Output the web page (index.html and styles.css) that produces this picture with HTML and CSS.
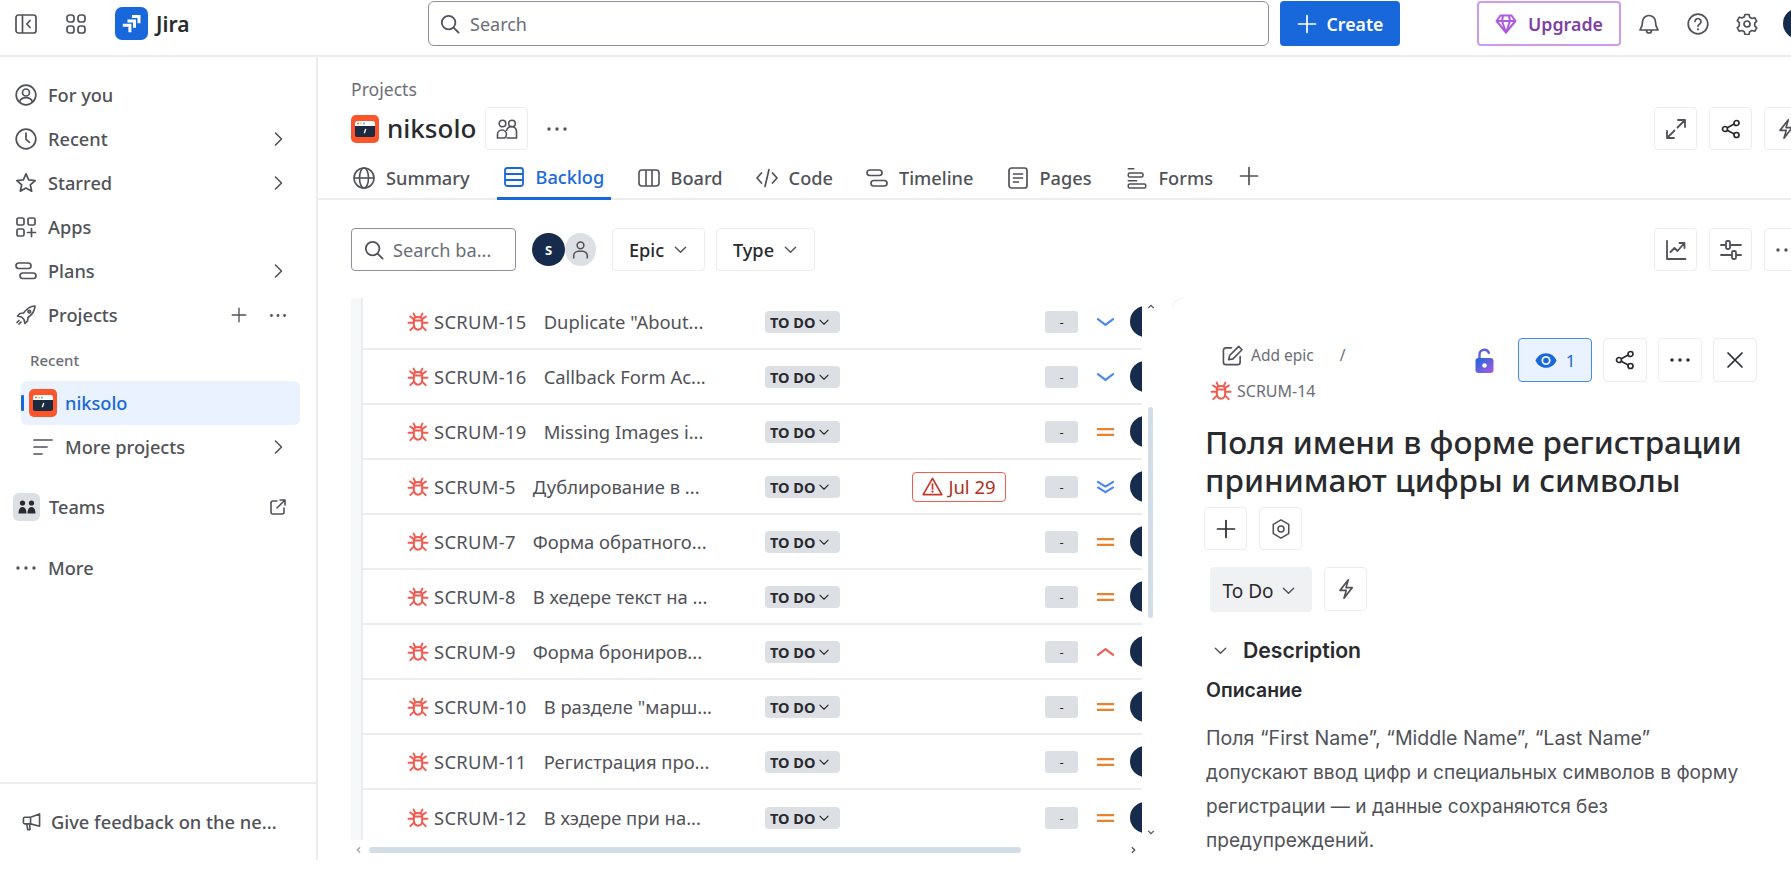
FILE: index.html
```html
<!DOCTYPE html>
<html lang="en">
<head>
<meta charset="utf-8">
<title>Jira backlog</title>
<link rel="stylesheet" href="styles.css">
</head>
<body>
<svg class="defs" aria-hidden="true">
  <defs>
    <symbol id="bug" viewBox="0 0 20 20"><g fill="none" stroke="#f15b50" stroke-width="1.800" stroke-linecap="round" stroke-linejoin="round"><path d="M6.200 8.200c0-1.600 1.600-2.800 3.800-2.800s3.800 1.200 3.800 2.800v4.400c0 2.400-1.700 4.400-3.800 4.400s-3.800-2-3.800-4.400z"/><path d="M6.400 8.600h7.200M7.600 5.600 6 2.400M12.400 5.600 14 2.400M6.200 10.600H1.400M13.800 10.600h4.800M6.400 14 3 17.400M13.600 14l3.400 3.400M6 7.200 2.800 5M14 7.200 17.200 5"/></g></symbol>
    <symbol id="chev-r" viewBox="0 0 16 16"><path d="m5.500 2 6 6-6 6" fill="none" stroke="#505258" stroke-width="1.600" stroke-linecap="round" stroke-linejoin="round"/></symbol>
    <symbol id="chev-d" viewBox="0 0 16 16"><path d="m2.500 5.500 5.500 5.500 5.500-5.500" fill="none" stroke="currentColor" stroke-width="1.500" stroke-linecap="round" stroke-linejoin="round"/></symbol>
    <symbol id="dots" viewBox="0 0 22 6"><g fill="currentColor"><circle cx="3" cy="3" r="1.700"/><circle cx="11" cy="3" r="1.700"/><circle cx="19" cy="3" r="1.700"/></g></symbol>
    <symbol id="plus" viewBox="0 0 20 20"><path d="M10 1.500v17M1.500 10h17" fill="none" stroke="currentColor" stroke-width="1.700" stroke-linecap="round"/></symbol>
    <symbol id="search" viewBox="0 0 20 20"><g fill="none" stroke="#505258" stroke-width="1.800" stroke-linecap="round"><circle cx="8.600" cy="8.600" r="6.800"/><path d="m13.600 13.600 5 5"/></g></symbol>
    <symbol id="share" viewBox="0 0 20 20"><g fill="none" stroke="#292a2e" stroke-width="1.700"><circle cx="4" cy="10" r="2.500"/><circle cx="15.500" cy="4" r="2.500"/><circle cx="15.500" cy="16" r="2.500"/><path d="m6.200 8.800 7-3.700M6.200 11.200l7 3.700"/></g></symbol>
    <symbol id="bolt" viewBox="0 0 20 24"><path d="M12.500 2 3.500 13.500h6.800l-2.500 8.500 9-11.500h-6.800z" fill="none" stroke="#505258" stroke-width="1.800" stroke-linejoin="round"/></symbol>
    <symbol id="proj" viewBox="0 0 28 28"><rect width="28" height="28" rx="5" fill="#fc552c"/><rect x="4" y="6" width="20" height="16" rx="2" fill="#1c2b42"/><path d="M4 11V8a2 2 0 0 1 2-2h16a2 2 0 0 1 2 2v3z" fill="#fff"/><circle cx="7" cy="8.600" r="1" fill="#f15b50"/><circle cx="10" cy="8.600" r="1" fill="#fbc828"/><circle cx="13" cy="8.600" r="1" fill="#42b2d7"/><path d="m14.600 14.500-1.200 3.200" stroke="#fff" stroke-width="1.400" stroke-linecap="round"/></symbol>
  </defs>
</svg>

<header class="topbar">
  <div class="topbar-left">
    <svg class="ic-panel" viewBox="0 0 22 20"><g fill="none" stroke="#505258" stroke-width="1.700"><rect x="1" y="1" width="20" height="18" rx="2.500"/><path d="M7.500 1v18"/><path d="m15 6.500-3.200 3.500 3.200 3.500" stroke-linecap="round" stroke-linejoin="round"/></g></svg>
    <svg class="ic-grid" viewBox="0 0 20 20"><g fill="none" stroke="#505258" stroke-width="1.700"><rect x="1" y="1" width="7" height="7" rx="2.500"/><rect x="12" y="1" width="7" height="7" rx="2.500"/><rect x="1" y="12" width="7" height="7" rx="2.500"/><rect x="12" y="12" width="7" height="7" rx="2.500"/></g></svg>
    <svg class="ic-jira" viewBox="0 0 33 33"><rect width="33" height="33" rx="7" fill="#1868db"/><g fill="#fff"><path d="M17 8h8.500v8.200h-3V11h-5.500z"/><path d="M12.500 12.400H21v8.300h-3v-5.300h-5.500z"/><path d="M7.800 16.800h8.600v8.400h-3v-5.400H7.800z"/></g></svg>
    <span class="brand">Jira</span>
  </div>
  <div class="global-search">
    <svg class="ic-20" viewBox="0 0 20 20"><use href="#search"/></svg>
    <span>Search</span>
  </div>
  <button class="create"><svg class="ic-20" viewBox="0 0 20 20"><use href="#plus"/></svg>Create</button>
  <button class="upgrade">
    <svg class="ic-gem" viewBox="0 0 22 20"><g fill="none" stroke="#af59e1" stroke-width="2" stroke-linejoin="round"><path d="M5.500 1.500h11l4 5.500L11 18.500 1.500 7z"/><path d="M1.500 7h19M8 1.500 7 7l4 11.500L15 7l-1-5.500"/></g></svg>
    Upgrade
  </button>
  <svg class="ic-top" viewBox="0 0 22 22"><g fill="none" stroke="#505258" stroke-width="1.700" stroke-linejoin="round" stroke-linecap="round"><path d="M4.500 9a6.500 6.500 0 0 1 13 0c0 4.500 2 6.500 2.500 8H2c.5-1.500 2.500-3.500 2.500-8zM8.500 17.500a2.500 2.500 0 0 0 5 0"/></g></svg>
  <svg class="ic-top" viewBox="0 0 22 22"><g fill="none" stroke="#505258" stroke-width="1.700" stroke-linecap="round"><circle cx="11" cy="11" r="9.800"/><path d="M8 8.500a3 3 0 1 1 4.700 2.500c-1 .7-1.700 1.200-1.700 2.300"/></g><circle cx="11" cy="16.300" r="1.100" fill="#505258"/></svg>
  <svg class="ic-top" viewBox="0 0 22 22"><g fill="none" stroke="#505258" stroke-width="1.700" stroke-linejoin="round"><path d="m9 1.500h4l.7 2.800 2.200 1.200 2.800-.8 2 3.500-2 2 0 2.600 2 2-2 3.500-2.800-.8-2.200 1.200-.7 2.800H9l-.7-2.800-2.200-1.200-2.800.8-2-3.500 2-2V9.700l-2-2 2-3.500 2.800.8 2.200-1.200z"/><circle cx="11" cy="11" r="3"/></g></svg>
  <span class="me"></span>
</header>

<div class="body">
  <nav class="sidebar">
    <div class="side-main">
      <a class="nav"><svg class="ic-nav" viewBox="0 0 22 22"><g fill="none" stroke="#505258" stroke-width="1.700"><circle cx="11" cy="11" r="9.800"/><circle cx="11" cy="8.500" r="3.500"/><path d="M4.500 18c1-3 3.500-4.300 6.500-4.300s5.500 1.300 6.500 4.300"/></g></svg><span>For you</span></a>
      <a class="nav"><svg class="ic-nav" viewBox="0 0 22 22"><g fill="none" stroke="#505258" stroke-width="1.700" stroke-linecap="round"><circle cx="11" cy="11" r="9.800"/><path d="M11 5v6.300l3.500 3"/></g></svg><span>Recent</span><svg class="chev" viewBox="0 0 16 16"><use href="#chev-r"/></svg></a>
      <a class="nav"><svg class="ic-nav" viewBox="0 0 22 22"><path d="m11 1.800 2.700 6 6.500.7-4.900 4.300 1.400 6.400L11 16l-5.700 3.200 1.400-6.400L1.800 8.500l6.500-.7z" fill="none" stroke="#505258" stroke-width="1.700" stroke-linejoin="round"/></svg><span>Starred</span><svg class="chev" viewBox="0 0 16 16"><use href="#chev-r"/></svg></a>
      <a class="nav"><svg class="ic-nav" viewBox="0 0 22 22"><g fill="none" stroke="#505258" stroke-width="1.700" stroke-linecap="round"><rect x="2" y="2" width="7" height="7" rx="1.500"/><rect x="13" y="2" width="7" height="7" rx="1.500"/><rect x="2" y="13" width="7" height="7" rx="1.500"/><path d="M16.500 12.500v8M12.500 16.500h8"/></g></svg><span>Apps</span></a>
      <a class="nav"><svg class="ic-nav" viewBox="0 0 22 22"><g fill="none" stroke="#505258" stroke-width="1.700"><rect x="1" y="3" width="15" height="5.500" rx="2.750"/><rect x="5" y="13" width="16" height="5.500" rx="2.750"/></g></svg><span>Plans</span><svg class="chev" viewBox="0 0 16 16"><use href="#chev-r"/></svg></a>
      <a class="nav"><svg class="ic-nav" viewBox="0 0 22 22"><g fill="none" stroke="#505258" stroke-width="1.700" stroke-linejoin="round" stroke-linecap="round"><path d="M20 2c-5 .2-8.500 2.800-11.500 7L5 9.500 2.500 12l4 1 2.500 2.500 1 4 2.500-2.500.5-3.500c4.200-3 6.800-6.500 7-11.500z"/><circle cx="14.300" cy="7.700" r="1.300"/><path d="M4 16.500 2 18.500M6 18l-2 2"/></g></svg><span>Projects</span><svg class="ic-plus" viewBox="0 0 20 20"><use href="#plus"/></svg><svg class="ic-dots" viewBox="0 0 22 6"><use href="#dots"/></svg></a>
      <div class="recent">Recent</div>
      <a class="project-link"><svg class="ic-proj" viewBox="0 0 28 28"><use href="#proj"/></svg><span>niksolo</span></a>
      <a class="nav nav-sub"><svg class="ic-lines" viewBox="0 0 20 18"><path d="M1 2h18M1 9h13M1 16h8" fill="none" stroke="#505258" stroke-width="1.700" stroke-linecap="round"/></svg><span>More projects</span><svg class="chev" viewBox="0 0 16 16"><use href="#chev-r"/></svg></a>
      <a class="nav nav-teams"><span class="teams-box"><svg viewBox="0 0 18 14"><g fill="#292a2e"><circle cx="4.500" cy="3" r="2.600"/><circle cx="13.500" cy="3" r="2.600"/><path d="M.5 13.500c0-4 1.500-6.500 4-6.500s4 2.500 4 6.500zM9.500 13.500c0-4 1.500-6.500 4-6.500s4 2.500 4 6.500z"/></g></svg></span><span>Teams</span><svg class="ic-ext" viewBox="0 0 16 16"><g fill="none" stroke="#505258" stroke-width="1.600" stroke-linecap="round" stroke-linejoin="round"><path d="M7 2H3a2 2 0 0 0-2 2v9a2 2 0 0 0 2 2h9a2 2 0 0 0 2-2V9"/><path d="M10 1h5v5M15 1 7 9"/></g></svg></a>
      <a class="nav nav-more"><svg class="ic-nav-dots" viewBox="0 0 22 6"><use href="#dots"/></svg><span>More</span></a>
    </div>
    <div class="feedback"><svg class="ic-mega" viewBox="0 0 20 20"><g fill="none" stroke="#505258" stroke-width="1.700" stroke-linejoin="round" stroke-linecap="round"><path d="M18.500 2v13L9 12.500H3a1.500 1.500 0 0 1-1.500-1.500V7A1.500 1.500 0 0 1 3 5.500h6zM9 5.500v7M5 12.500l1 6h2.500l-.5-6"/></g></svg><span>Give feedback on the ne...</span></div>
  </nav>

  <main class="main">
    <div class="crumb">Projects</div>
    <div class="title-row">
      <svg class="ic-title" viewBox="0 0 28 28"><use href="#proj"/></svg>
      <h1 class="title">niksolo</h1>
      <button class="sq"><svg class="ic-22" viewBox="0 0 22 22"><g fill="none" stroke="#505258" stroke-width="1.600"><circle cx="6.500" cy="5.500" r="3.300"/><circle cx="16" cy="5.500" r="3.300"/><path d="M1.500 20v-3.500a4.500 4.500 0 0 1 9 0 4.500 4.500 0 0 1-2 3.500zM10.500 13a4.500 4.500 0 0 1 10 1v6h-10"/></g></svg></button>
      <svg class="ic-title-dots" viewBox="0 0 22 6"><use href="#dots"/></svg>
      <div class="actions">
        <button class="sq"><svg class="ic-22" viewBox="0 0 22 22"><path d="M13 2h7v7M20 2l-7.500 7.500M9 20H2v-7M2 20l7.500-7.500" fill="none" stroke="#505258" stroke-width="1.800" stroke-linecap="round" stroke-linejoin="round"/></svg></button>
        <button class="sq"><svg class="ic-20" viewBox="0 0 20 20"><use href="#share"/></svg></button>
        <button class="sq"><svg class="ic-22" viewBox="0 0 20 24"><use href="#bolt"/></svg></button>
      </div>
    </div>
    <div class="tabs">
      <a class="tab tab-summary"><svg class="ic-tab" viewBox="0 0 22 22"><g fill="none" stroke="#505258" stroke-width="1.600"><circle cx="11" cy="11" r="10"/><ellipse cx="11" cy="11" rx="4.500" ry="10"/><path d="M1 11h20"/></g></svg>Summary</a>
      <a class="tab tab-backlog"><svg class="ic-tab" viewBox="0 0 20 22"><g fill="none" stroke="#1868db" stroke-width="1.800"><rect x="1" y="2" width="18" height="18" rx="2.500"/><path d="M1 8h18M1 14h18"/></g></svg>Backlog</a>
      <a class="tab tab-board"><svg class="ic-tab" viewBox="0 0 22 20"><g fill="none" stroke="#505258" stroke-width="1.600"><rect x="1" y="2" width="20" height="16" rx="3"/><path d="M8 2v16M14 2v16"/></g></svg>Board</a>
      <a class="tab tab-code"><svg class="ic-tab" viewBox="0 0 22 20"><path d="M5.500 5 1 10l4.500 5M16.500 5 21 10l-4.500 5M13 1.500 9 18.500" fill="none" stroke="#505258" stroke-width="1.700" stroke-linecap="round" stroke-linejoin="round"/></svg>Code</a>
      <a class="tab tab-timeline"><svg class="ic-tab" viewBox="0 0 22 20"><g fill="none" stroke="#505258" stroke-width="1.700"><rect x="1" y="2" width="15" height="5.500" rx="2.750"/><rect x="5" y="12.500" width="16" height="5.500" rx="2.750"/></g></svg>Timeline</a>
      <a class="tab tab-pages"><svg class="ic-tab-sm" viewBox="0 0 20 22"><g fill="none" stroke="#505258" stroke-width="1.700" stroke-linecap="round"><rect x="1" y="1" width="18" height="20" rx="2.500"/><path d="M5.500 7h9M5.500 11h9M5.500 15h5"/></g></svg>Pages</a>
      <a class="tab tab-forms"><svg class="ic-tab" viewBox="0 0 22 24"><g fill="none" stroke="#505258" stroke-width="1.700" stroke-linecap="round"><path d="M1.500 2h6"/><rect x="1.500" y="6.500" width="16" height="4.500" rx="1.500"/><path d="M1.500 15h9"/><rect x="1.500" y="18.500" width="19" height="4.500" rx="1.500"/></g></svg>Forms</a>
      <svg class="ic-tab-plus" viewBox="0 0 20 20"><use href="#plus"/></svg>
    </div>
    <div class="toolbar">
      <div class="board-search"><svg class="ic-20" viewBox="0 0 20 20"><use href="#search"/></svg><span>Search ba...</span></div>
      <div class="avatars"><span class="av-s">S</span><span class="av-u"><svg viewBox="0 0 20 22"><g fill="none" stroke="#505258" stroke-width="1.800"><circle cx="10" cy="5.500" r="4"/><path d="M2 21v-3a5.500 5.500 0 0 1 5.500-5.500h5A5.500 5.500 0 0 1 18 18v3"/></g></svg></span></div>
      <button class="filter filter-epic">Epic<svg class="ic-chev-f" viewBox="0 0 16 16"><use href="#chev-d"/></svg></button>
      <button class="filter filter-type">Type<svg class="ic-chev-f" viewBox="0 0 16 16"><use href="#chev-d"/></svg></button>
      <div class="actions">
        <button class="sq"><svg class="ic-22" viewBox="0 0 22 22"><path d="M2 2v18h18.500M5.500 13l4-4 3 3L19 4.500M14.500 4H19.500v5" fill="none" stroke="#505258" stroke-width="1.800" stroke-linecap="round" stroke-linejoin="round"/></svg></button>
        <button class="sq"><svg class="ic-22" viewBox="0 0 22 22"><g fill="none" stroke="#505258" stroke-width="1.800" stroke-linecap="round"><path d="M1 6h4M11 6h10M1 16h10M17 16h4"/><rect x="6" y="2" width="4" height="8" rx="1.500"/><rect x="12" y="12" width="4" height="8" rx="1.500"/></g></svg></button>
        <button class="sq"><svg class="ic-22" viewBox="0 0 22 6"><use href="#dots"/></svg></button>
      </div>
    </div>

    <div class="workarea">
      <div class="backlog">
        <div class="list-wrap">
          <div class="rail"></div>
          <div class="rows">
            <div class="row"><div class="cell-issue"><svg class="bug" viewBox="0 0 20 20"><use href="#bug"/></svg><span class="key">SCRUM-15</span><span class="summary">Duplicate "About...</span></div><span class="loz">TO DO<svg class="loz-chev" viewBox="0 0 16 16"><use href="#chev-d"/></svg></span><div class="cell-date"></div><span class="sprint">-</span><svg class="prio" viewBox="0 0 20 14"><path d="m2 4 8 6 8-6" fill="none" stroke="#4688ec" stroke-width="2.200" stroke-linecap="round" stroke-linejoin="round"/></svg><span class="assignee"></span></div>
            <div class="row"><div class="cell-issue"><svg class="bug" viewBox="0 0 20 20"><use href="#bug"/></svg><span class="key">SCRUM-16</span><span class="summary">Callback Form Ac...</span></div><span class="loz">TO DO<svg class="loz-chev" viewBox="0 0 16 16"><use href="#chev-d"/></svg></span><div class="cell-date"></div><span class="sprint">-</span><svg class="prio" viewBox="0 0 20 14"><path d="m2 4 8 6 8-6" fill="none" stroke="#4688ec" stroke-width="2.200" stroke-linecap="round" stroke-linejoin="round"/></svg><span class="assignee"></span></div>
            <div class="row"><div class="cell-issue"><svg class="bug" viewBox="0 0 20 20"><use href="#bug"/></svg><span class="key">SCRUM-19</span><span class="summary">Missing Images i...</span></div><span class="loz">TO DO<svg class="loz-chev" viewBox="0 0 16 16"><use href="#chev-d"/></svg></span><div class="cell-date"></div><span class="sprint">-</span><svg class="prio" viewBox="0 0 20 14"><path d="M1 4h18M1 10h18" fill="none" stroke="#e9822e" stroke-width="2.400"/></svg><span class="assignee"></span></div>
            <div class="row"><div class="cell-issue"><svg class="bug" viewBox="0 0 20 20"><use href="#bug"/></svg><span class="key">SCRUM-5</span><span class="summary">Дублирование в ...</span></div><span class="loz">TO DO<svg class="loz-chev" viewBox="0 0 16 16"><use href="#chev-d"/></svg></span><div class="cell-date"><span class="date"><svg class="ic-warn" viewBox="0 0 22 20"><g fill="none" stroke="#c9372c" stroke-width="1.800" stroke-linejoin="round" stroke-linecap="round"><path d="M11 1.500 1.200 18.500h19.600z"/><path d="M11 7.500v5"/></g><circle cx="11" cy="15.300" r="1.200" fill="#c9372c"/></svg>Jul 29</span></div><span class="sprint">-</span><svg class="prio" viewBox="0 0 20 14"><path d="m2 1.500 8 5 8-5M2 7.500l8 5 8-5" fill="none" stroke="#4688ec" stroke-width="2.200" stroke-linecap="round" stroke-linejoin="round"/></svg><span class="assignee"></span></div>
            <div class="row"><div class="cell-issue"><svg class="bug" viewBox="0 0 20 20"><use href="#bug"/></svg><span class="key">SCRUM-7</span><span class="summary">Форма обратного...</span></div><span class="loz">TO DO<svg class="loz-chev" viewBox="0 0 16 16"><use href="#chev-d"/></svg></span><div class="cell-date"></div><span class="sprint">-</span><svg class="prio" viewBox="0 0 20 14"><path d="M1 4h18M1 10h18" fill="none" stroke="#e9822e" stroke-width="2.400"/></svg><span class="assignee"></span></div>
            <div class="row"><div class="cell-issue"><svg class="bug" viewBox="0 0 20 20"><use href="#bug"/></svg><span class="key">SCRUM-8</span><span class="summary">В хедере текст на ...</span></div><span class="loz">TO DO<svg class="loz-chev" viewBox="0 0 16 16"><use href="#chev-d"/></svg></span><div class="cell-date"></div><span class="sprint">-</span><svg class="prio" viewBox="0 0 20 14"><path d="M1 4h18M1 10h18" fill="none" stroke="#e9822e" stroke-width="2.400"/></svg><span class="assignee"></span></div>
            <div class="row"><div class="cell-issue"><svg class="bug" viewBox="0 0 20 20"><use href="#bug"/></svg><span class="key">SCRUM-9</span><span class="summary">Форма брониров...</span></div><span class="loz">TO DO<svg class="loz-chev" viewBox="0 0 16 16"><use href="#chev-d"/></svg></span><div class="cell-date"></div><span class="sprint">-</span><svg class="prio" viewBox="0 0 20 14"><path d="m2 10 8-6 8 6" fill="none" stroke="#f15b50" stroke-width="2.200" stroke-linecap="round" stroke-linejoin="round"/></svg><span class="assignee"></span></div>
            <div class="row"><div class="cell-issue"><svg class="bug" viewBox="0 0 20 20"><use href="#bug"/></svg><span class="key">SCRUM-10</span><span class="summary">В разделе "марш...</span></div><span class="loz">TO DO<svg class="loz-chev" viewBox="0 0 16 16"><use href="#chev-d"/></svg></span><div class="cell-date"></div><span class="sprint">-</span><svg class="prio" viewBox="0 0 20 14"><path d="M1 4h18M1 10h18" fill="none" stroke="#e9822e" stroke-width="2.400"/></svg><span class="assignee"></span></div>
            <div class="row"><div class="cell-issue"><svg class="bug" viewBox="0 0 20 20"><use href="#bug"/></svg><span class="key">SCRUM-11</span><span class="summary">Регистрация про...</span></div><span class="loz">TO DO<svg class="loz-chev" viewBox="0 0 16 16"><use href="#chev-d"/></svg></span><div class="cell-date"></div><span class="sprint">-</span><svg class="prio" viewBox="0 0 20 14"><path d="M1 4h18M1 10h18" fill="none" stroke="#e9822e" stroke-width="2.400"/></svg><span class="assignee"></span></div>
            <div class="row"><div class="cell-issue"><svg class="bug" viewBox="0 0 20 20"><use href="#bug"/></svg><span class="key">SCRUM-12</span><span class="summary">В хэдере при на...</span></div><span class="loz">TO DO<svg class="loz-chev" viewBox="0 0 16 16"><use href="#chev-d"/></svg></span><div class="cell-date"></div><span class="sprint">-</span><svg class="prio" viewBox="0 0 20 14"><path d="M1 4h18M1 10h18" fill="none" stroke="#e9822e" stroke-width="2.400"/></svg><span class="assignee"></span></div>
          </div>
          <div class="vscroll">
            <svg class="arrow" viewBox="0 0 10 6"><path d="m1.500 5 3.500-3.500L8.500 5" fill="none" stroke="#505258" stroke-width="1.600"/></svg>
            <div class="vthumb"></div>
            <svg class="arrow arrow-down" viewBox="0 0 10 6"><path d="m1.500 1 3.500 3.500L8.500 1" fill="none" stroke="#505258" stroke-width="1.600"/></svg>
          </div>
        </div>
        <div class="hscroll">
          <svg class="arrow-h" viewBox="0 0 6 10"><path d="M5 1.500 1.500 5 5 8.500" fill="none" stroke="#a0a4ab" stroke-width="1.600"/></svg>
          <div class="hthumb"></div>
          <svg class="arrow-h arrow-right" viewBox="0 0 6 10"><path d="M1 1.500 4.500 5 1 8.500" fill="none" stroke="#505258" stroke-width="1.600"/></svg>
        </div>
      </div>

      <aside class="detail">
        <div class="detail-top">
          <div class="crumbs">
            <div class="crumb-epic"><svg class="ic-edit" viewBox="0 0 22 22"><g fill="none" stroke="#505258" stroke-width="1.700" stroke-linecap="round" stroke-linejoin="round"><path d="M10 3H4a2.500 2.500 0 0 0-2.500 2.500V18A2.500 2.500 0 0 0 4 20.500h12.500A2.500 2.500 0 0 0 19 18v-6"/><path d="M17.500 1.500 21 5l-9.500 9.500-4.500 1 1-4.500z"/></g></svg><span>Add epic</span><span class="slash">/</span></div>
            <div class="crumb-key"><svg class="bug" viewBox="0 0 20 20"><use href="#bug"/></svg><span>SCRUM-14</span></div>
          </div>
          <svg class="ic-lock" viewBox="0 0 20 26"><defs><linearGradient id="lockg" x1="0" y1="0" x2="1" y2="1"><stop offset="0" stop-color="#1868db"/><stop offset="1" stop-color="#af59e1"/></linearGradient></defs><path d="M5 10V6.500a4.800 4.800 0 0 1 9.300-1.600" fill="none" stroke="#5b5fe0" stroke-width="2.400" stroke-linecap="round"/><rect x="1" y="10" width="18" height="15" rx="3" fill="url(#lockg)"/><circle cx="10" cy="17.500" r="2.200" fill="#fff"/></svg>
          <button class="watch"><svg class="ic-eye" viewBox="0 0 24 16"><path d="M12 0C6.500 0 2.500 3.500.5 8c2 4.500 6 8 11.500 8s9.500-3.500 11.500-8C21.500 3.500 17.500 0 12 0z" fill="#1868db"/><circle cx="12" cy="8" r="5" fill="#e9f2fe"/><circle cx="12" cy="8" r="3" fill="#1868db"/></svg>1</button>
          <button class="sq"><svg class="ic-20" viewBox="0 0 20 20"><use href="#share"/></svg></button>
          <button class="sq"><svg class="ic-22 dk" viewBox="0 0 22 6"><use href="#dots"/></svg></button>
          <button class="sq"><svg class="ic-18" viewBox="0 0 18 18"><path d="m2 2 14 14M16 2 2 16" fill="none" stroke="#292a2e" stroke-width="1.700" stroke-linecap="round"/></svg></button>
        </div>
        <h2 class="issue-title">Поля имени в форме регистрации принимают цифры и символы</h2>
        <div class="issue-actions">
          <button class="sq"><svg class="ic-20 dk" viewBox="0 0 20 20"><use href="#plus"/></svg></button>
          <button class="sq"><svg class="ic-20" viewBox="0 0 20 22"><g fill="none" stroke="#505258" stroke-width="1.700" stroke-linejoin="round"><path d="M10 1 18.500 6v10L10 21 1.500 16V6z"/><circle cx="10" cy="11" r="3.300"/></g></svg></button>
        </div>
        <div class="status-row">
          <button class="status">To Do<svg class="ic-chev-s" viewBox="0 0 16 16"><use href="#chev-d"/></svg></button>
          <button class="sq"><svg class="ic-22" viewBox="0 0 20 24"><use href="#bolt"/></svg></button>
        </div>
        <div class="desc-head"><svg class="ic-chev-desc" viewBox="0 0 16 16"><use href="#chev-d"/></svg><span>Description</span></div>
        <h3 class="desc-sub">Описание</h3>
        <p class="desc-text"><span class="latin">Поля “First Name”, “Middle Name”, “Last Name”</span><br>допускают ввод цифр и специальных символов в форму регистрации — и данные сохраняются без предупреждений.</p>
      </aside>
    </div>
  </main>
</div>
</body>
</html>
```

FILE: styles.css
```css
* { box-sizing: border-box; }
html, body { margin: 0; height: 100%; background: #fff; overflow: hidden; }
body { font-family: "Noto Sans", "Liberation Sans", sans-serif; color: #505258; width: 1791px; height: 888px; }
svg { display: block; flex: none; }
button { font: inherit; color: inherit; background: #fff; padding: 0; margin: 0; cursor: default; }
h1, h2, h3, p { margin: 0; }
.defs { width: 0; height: 0; position: absolute; }

.topbar { height: 57px; border-bottom: 2px solid #ebecee; display: flex; align-items: flex-start; padding-top: 1px; overflow: hidden; }
.topbar > * { flex: none; }
.topbar-left { width: 428px; height: 45px; display: flex; align-items: center; padding-left: 15px; }
.ic-panel { width: 22px; height: 20px; }
.ic-grid { width: 20px; height: 20px; margin-left: 29px; }
.ic-jira { width: 33px; height: 33px; margin-left: 29px; }
.brand { margin-left: 8px; font-size: 21px; font-weight: 600; color: #292a2e; }
.global-search { width: 841px; height: 45px; border: 1.500px solid #8c8f97; border-radius: 6px; display: flex; align-items: center; padding-left: 11px; gap: 10px; font-size: 18px; color: #6b6e76; }
.create { margin-left: 11px; width: 120px; height: 45px; background: #1868db; color: #fff; border: 0; border-radius: 4px; display: flex; align-items: center; justify-content: center; gap: 10px; font-size: 17.700px; font-weight: 600; }
.upgrade { margin-left: 77px; width: 144px; height: 45px; border: 2px solid #cf9bef; border-radius: 4px; color: #803fa5; display: flex; align-items: center; justify-content: center; gap: 11px; font-size: 17.800px; font-weight: 600; }
.ic-gem { width: 22px; height: 20px; }
.ic-top { width: 22px; height: 22px; margin-top: 12px; }
.upgrade + .ic-top { margin-left: 17px; }
.ic-top + .ic-top { margin-left: 27px; }
.me { width: 32px; height: 31px; border-radius: 50%; background: #172b4d; margin: 7px 0 0 25px; flex: none; }

.body { display: flex; height: 803px; }
.sidebar { width: 318px; border-right: 2px solid #ebecee; display: flex; flex-direction: column; flex: none; }
.side-main { flex: 1; padding-top: 16px; }
.nav { height: 44px; display: flex; align-items: center; padding-left: 15px; font-size: 18.200px; font-weight: 500; color: #505258; }
.nav > span:nth-of-type(1) { margin-left: 11px; }
.ic-nav { width: 22px; height: 22px; }
.chev { width: 16px; height: 16px; margin-left: auto; margin-right: 30px; }
.ic-plus { width: 16px; height: 16px; margin-left: auto; color: #505258; }
.ic-dots { width: 18px; height: 5px; margin: 0 29px 0 22px; color: #505258; }
.recent { height: 30px; margin-top: 8px; padding-left: 30px; font-size: 15px; line-height: 30px; font-weight: 500; color: #6b6e76; }
.project-link { margin: 6px 16px 0 21px; height: 44px; border-radius: 6px; background: #e9f2fe; display: flex; align-items: center; padding-left: 8px; gap: 8px; color: #1868db; font-size: 18.200px; font-weight: 500; position: relative; }
.project-link::before { content: ""; position: absolute; left: 0; top: 14px; width: 3px; height: 16px; border-radius: 1px; background: #1868db; }
.ic-proj { width: 28px; height: 28px; }
.nav-sub { height: 44px; padding-left: 33px; }
.nav-sub > span:nth-of-type(1) { margin-left: 12px; }
.ic-lines { width: 20px; height: 18px; }
.nav-teams { margin-top: 16px; padding-left: 13px; height: 44px; }
.nav-teams > span:nth-of-type(1) { margin-left: 0; }
.nav-teams > span:nth-of-type(2) { margin-left: 9px; }
.teams-box { width: 27px; height: 28px; border-radius: 6px; background: #dcdfe4; display: flex; align-items: center; justify-content: center; }
.teams-box svg { width: 18px; height: 14px; }
.ic-ext { width: 16px; height: 16px; margin-left: auto; margin-right: 30px; }
.nav-more { margin-top: 17px; }
.ic-nav-dots { width: 22px; height: 6px; color: #505258; }
.feedback { height: 78px; border-top: 2px solid #ebecee; display: flex; align-items: center; padding: 0 0 2px 22px; gap: 10px; font-size: 18.300px; font-weight: 500; color: #505258; }
.ic-mega { width: 19px; height: 19px; }

.main { flex: 1; min-width: 0; padding-top: 21px; display: flex; flex-direction: column; }
.crumb { height: 29px; padding-left: 33px; font-size: 17.600px; line-height: 22px; color: #6b6e76; }
.title-row { height: 43px; padding-left: 33px; display: flex; align-items: center; margin-right: -16px; }
.ic-title { width: 28px; height: 28px; }
.title { margin: 0 9px 0 8px; font-size: 26px; font-weight: 500; color: #292a2e; line-height: 43px; }
.ic-title-dots { width: 22px; height: 6px; margin-left: 18px; color: #505258; }
.actions { margin-left: auto; display: flex; gap: 12px; }
.sq { width: 43px; height: 43px; border: 1.500px solid #ebecee; border-radius: 4px; display: flex; align-items: center; justify-content: center; flex: none; }
.ic-22 { width: 22px; height: 22px; color: #505258; }
.ic-20 { width: 20px; height: 20px; }
.ic-18 { width: 18px; height: 18px; }
.dk { color: #292a2e; }
.sq .ic-22[viewBox="0 0 22 6"] { height: 6px; }
.tabs { height: 50px; border-bottom: 2px solid #ebecee; padding-left: 35px; display: flex; align-items: stretch; font-size: 18.200px; font-weight: 500; color: #505258; position: relative; }
.tab { display: flex; align-items: center; gap: 11px; height: 48px; padding-top: 7px; }
.ic-tab { width: 22px; height: 22px; }
.ic-tab-sm { width: 20px; height: 22px; }
.tab-backlog { margin: 0 0 -2px 27px; height: 50px; padding: 6px 7px 0 7px; border-bottom: 3px solid #1868db; color: #1868db; width: 114px; gap: 12px; }
.tab-backlog .ic-tab { width: 20px; }
.tab-board { margin-left: 27px; }
.tab-code { margin-left: 33px; }
.tab-timeline { margin-left: 33px; }
.tab-pages { margin-left: 35px; }
.tab-forms { margin-left: 34px; }
.ic-tab-plus { width: 20px; height: 20px; margin: 16px 0 0 26px; color: #505258; }
.toolbar { margin-top: 28px; height: 43px; padding-left: 33px; margin-right: -16px; display: flex; align-items: center; flex: none; }
.board-search { width: 165px; height: 43px; border: 1.500px solid #8c8f97; border-radius: 4px; display: flex; align-items: center; padding-left: 12px; gap: 9px; font-size: 18.200px; color: #6b6e76; }
.avatars { display: flex; margin-left: 16px; }
.av-s { width: 33px; height: 33px; border-radius: 50%; background: #172b4d; color: #fff; font-size: 13px; font-weight: 700; display: flex; align-items: center; justify-content: center; }
.av-u { width: 31px; height: 33px; border-radius: 50%; background: #dcdfe4; display: flex; align-items: center; justify-content: center; }
.av-u svg { width: 17px; height: 20px; }
.filter { height: 43px; border: 1.500px solid #ebecee; border-radius: 4px; display: flex; align-items: center; justify-content: center; gap: 9px; font-size: 18.200px; font-weight: 500; color: #292a2e; }
.filter-epic { width: 93px; margin-left: 16px; }
.filter-type { width: 99px; margin-left: 11px; }
.ic-chev-f { width: 15px; height: 15px; color: #505258; }

.workarea { margin-top: 27px; flex: 1; min-height: 0; display: flex; padding-left: 33px; }
.backlog { width: 821px; flex: none; display: flex; flex-direction: column; }
.list-wrap { height: 542px; display: flex; }
.rail { width: 12px; background: #f7f8f9; border-right: 2px solid #ebecee; flex: none; }
.rows { width: 779px; overflow: hidden; flex: none; }
.rows .row:first-child { margin-top: -3px; }
.row { height: 55px; border-bottom: 2px solid #ebecee; display: flex; align-items: center; padding-left: 44px; overflow: hidden; }
.row:last-child { border-bottom: 0; }
.cell-issue { width: 358px; display: flex; align-items: center; flex: none; }
.bug { width: 22px; height: 22px; }
.key { margin-left: 5px; font-size: 18.400px; letter-spacing: .3px; color: #505258; }
.summary { margin-left: 17px; font-size: 18.400px; color: #505258; white-space: nowrap; }
.loz { width: 75px; height: 22px; border-radius: 4px; background: #dcdfe4; color: #292a2e; font-size: 14.500px; font-weight: 700; display: flex; align-items: center; padding-left: 5px; gap: 3px; flex: none; }
.loz-chev { width: 12px; height: 12px; color: #292a2e; }
.cell-date { width: 205px; flex: none; padding-left: 72px; }
.date { width: 94px; height: 30px; border: 1.500px solid #f15b50; border-radius: 4px; color: #ae2e24; display: flex; align-items: center; justify-content: center; gap: 5px; font-size: 18.500px; }
.ic-warn { width: 21px; height: 19px; }
.sprint { width: 33px; height: 22px; border-radius: 3px; background: #dcdfe4; display: flex; align-items: center; justify-content: center; font-size: 13px; color: #292a2e; flex: none; }
.prio { width: 19px; height: 14px; margin-left: 18px; }
.assignee { width: 31px; height: 31px; border-radius: 50%; background: #172b4d; margin-left: 15px; flex: none; }
.vscroll { width: 30px; flex: none; padding: 6px 0 0 6px; display: flex; flex-direction: column; align-items: flex-start; }
.arrow { width: 8px; height: 5px; margin-left: -1px; }
.vthumb { width: 5px; height: 211px; border-radius: 3px; background: #d3dde8; margin-top: 98px; }
.arrow-down { margin-top: 212px; }
.hscroll { height: 20px; margin-left: 5px; display: flex; align-items: center; }
.arrow-h { width: 5px; height: 8px; }
.hthumb { width: 652px; height: 6px; border-radius: 3px; background: #d3dde8; margin-left: 8px; }
.arrow-right { margin-left: 110px; }

.detail { flex: 1; min-width: 0; background: #fff; padding: 40px 0 0 33px; position: relative; border-top-left-radius: 10px; }
.detail::before { content: ""; position: absolute; left: 0; top: 0; width: 10px; height: 10px; border-top: 1px solid #f1f2f4; border-left: 1px solid #f1f2f4; border-top-left-radius: 10px; }
.detail-top { display: flex; height: 44px; }
.crumbs { width: 269px; flex: none; font-size: 15.500px; color: #6b6e76; }
.crumb-epic { display: flex; align-items: center; height: 34px; padding-left: 17px; }
.ic-edit { width: 21px; height: 21px; }
.crumb-epic span:first-of-type { margin-left: 8px; }
.slash { margin-left: 26px; }
.crumb-key { display: flex; align-items: center; margin-top: 8px; padding-left: 5px; gap: 5px; font-size: 16px; }
.ic-lock { width: 21px; height: 26px; margin-top: 10px; }
.watch { margin-left: 23px; width: 74px; height: 44px; border: 1.500px solid #4688ec; border-radius: 4px; background: #e9f2fe; color: #1868db; display: flex; align-items: center; justify-content: center; gap: 9px; font-size: 17px; }
.ic-eye { width: 22px; height: 15px; }
.detail-top .sq { width: 44px; height: 44px; margin-left: 11px; }
.issue-title { margin-top: 41px; width: 560px; font-size: 31.500px; line-height: 38px; font-weight: 500; color: #292a2e; }
.issue-actions { margin: 8px 0 0 -1px; display: flex; gap: 12px; }
.status-row { margin: 17px 0 0 5px; display: flex; gap: 12px; }
.status { width: 102px; height: 45px; border: 0; border-radius: 4px; background: #f0f1f2; display: flex; align-items: center; justify-content: center; gap: 7px; padding: 2px 4px 0 0; font-size: 19px; color: #292a2e; }
.status-row .sq { height: 44px; }
.ic-chev-s { width: 15px; height: 15px; color: #505258; }
.desc-head { margin: 21px 0 0 8px; display: flex; align-items: center; gap: 15px; font-family: Inter, "Noto Sans", sans-serif; font-size: 21.200px; font-weight: 600; color: #292a2e; height: 34px; }
.ic-chev-desc { width: 15px; height: 15px; color: #505258; }
.desc-sub { margin: 10px 0 0 1px; font-family: Inter, "Noto Sans", sans-serif; font-size: 19.400px; font-weight: 600; line-height: 26px; color: #292a2e; }
.desc-text { margin: 18px 0 0 1px; width: 545px; font-family: Inter, "Noto Sans", sans-serif; font-size: 19.100px; line-height: 34px; color: #505258; }
.latin { font-size: 19.600px; }
```
